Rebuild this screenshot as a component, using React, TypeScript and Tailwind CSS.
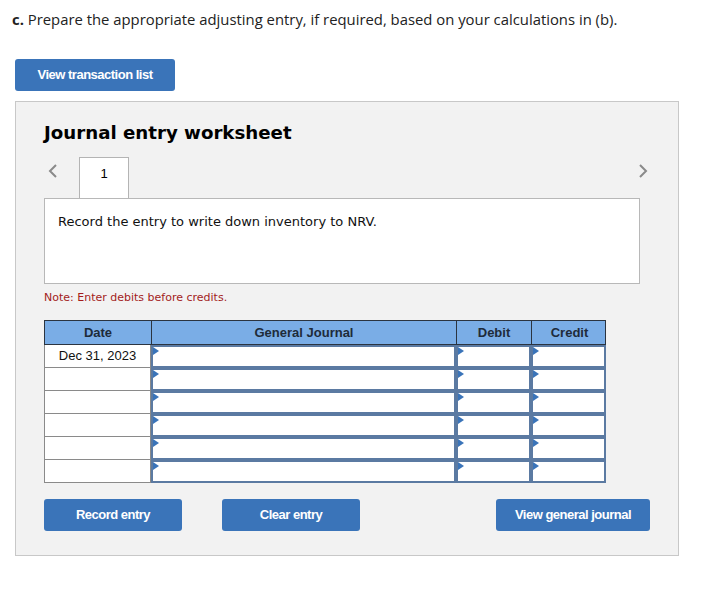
import React from 'react';

const Arrow: React.FC<{ dir: 'left' | 'right' }> = ({ dir }) => (
  <svg width="10" height="16" viewBox="0 0 10 16" className="text-[#8a8a8a]">
    <path
      d={dir === 'left' ? 'M8 2 L2 8 L8 14' : 'M2 2 L8 8 L2 14'}
      fill="none"
      stroke="currentColor"
      strokeWidth="2"
    />
  </svg>
);

const InputCell: React.FC<{ className?: string }> = ({ className = '' }) => (
  <div className={`relative h-full bg-white border-2 border-[#5b7aa2] ${className}`}>
    <span className="absolute left-0 top-0 w-0 h-0 border-y-[4px] border-y-transparent border-l-[6px] border-l-[#3a74b9]" />
  </div>
);

const Button: React.FC<{ label: string; className?: string }> = ({ label, className = '' }) => (
  <button
    className={`h-8 rounded-[3px] bg-[#3a74b9] text-white font-bold text-[13px] tracking-[-0.5px] ${className}`}
    style={{ fontFamily: '"Liberation Sans", Arial, sans-serif' }}
  >
    {label}
  </button>
);

const App: React.FC = () => {
  const rows = [0, 1, 2, 3, 4, 5];

  return (
    <div className="w-[720px] h-[591px] bg-white relative">
      <p
        className="pl-3 pt-[9px] text-[14.85px] leading-5 text-[#222]"
        style={{ fontFamily: '"Open Sans", sans-serif' }}
      >
        <span className="font-bold">c.</span> Prepare the appropriate adjusting entry, if required, based on your calculations in (b).
      </p>

      <div className="pl-[15px] mt-[30px]">
        <Button label="View transaction list" className="w-[160px]" />
      </div>

      <div className="ml-[15px] mt-[10px] w-[664px] h-[455px] bg-[#f2f2f2] border border-[#c8c8c8] pl-[28px] pt-[19px]">
        <h2
          className="text-[18.2px] font-bold leading-6 text-black"
          style={{ fontFamily: '"DejaVu Sans", Verdana, sans-serif' }}
        >
          Journal entry worksheet
        </h2>

        <div className="flex items-start mt-[12px] h-[41px] w-[604px]">
          <div className="w-[35px] pt-[6px] pl-[4px]">
            <Arrow dir="left" />
          </div>
          <div
            className="w-[50px] h-[41px] bg-white border border-b-0 border-[#b4b4b4] flex justify-center pt-[6px] text-[13px] relative z-10 -mb-px"
            style={{ fontFamily: '"Liberation Sans", Arial, sans-serif' }}
          >
            1
          </div>
          <div className="flex-1" />
          <div className="pt-[6px]">
            <Arrow dir="right" />
          </div>
        </div>

        <div
          className="w-[596px] h-[86px] bg-white border border-[#b8b8b8] px-[13px] pt-[13px] text-[13px] text-[#111]"
          style={{ fontFamily: '"DejaVu Sans", Verdana, sans-serif' }}
        >
          Record the entry to write down inventory to NRV.
        </div>

        <p
          className="mt-[6px] text-[11px] leading-4 text-[#a31c1c]"
          style={{ fontFamily: '"DejaVu Sans", Verdana, sans-serif' }}
        >
          Note: Enter debits before credits.
        </p>

        <div
          className="mt-[14px] w-[562px] text-[13px]"
          style={{ fontFamily: '"Liberation Sans", Arial, sans-serif' }}
        >
          <div className="grid grid-cols-[107px_305px_75px_75px] h-[25px] bg-[#7aade6] border border-[#2b3440] font-bold text-[#1e2b3a]">
            <div className="flex items-center justify-center border-r border-[#2b3440]">Date</div>
            <div className="flex items-center justify-center border-r border-[#2b3440]">General Journal</div>
            <div className="flex items-center justify-center border-r border-[#2b3440]">Debit</div>
            <div className="flex items-center justify-center">Credit</div>
          </div>
          {rows.map((r) => (
            <div key={r} className="grid grid-cols-[107px_305px_75px_75px] h-[23px]">
              <div className="bg-white border-l border-r border-b border-[#8a8a8a] flex items-center justify-center text-[#111]">
                {r === 0 ? 'Dec 31, 2023' : ''}
              </div>
              <InputCell />
              <InputCell />
              <InputCell />
            </div>
          ))}
        </div>

        <div className="flex items-center mt-[16px]">
          <Button label="Record entry" className="w-[138px]" />
          <Button label="Clear entry" className="w-[138px] ml-[40px]" />
          <Button label="View general journal" className="w-[154px] ml-[136px]" />
        </div>
      </div>
    </div>
  );
};

export default App;
